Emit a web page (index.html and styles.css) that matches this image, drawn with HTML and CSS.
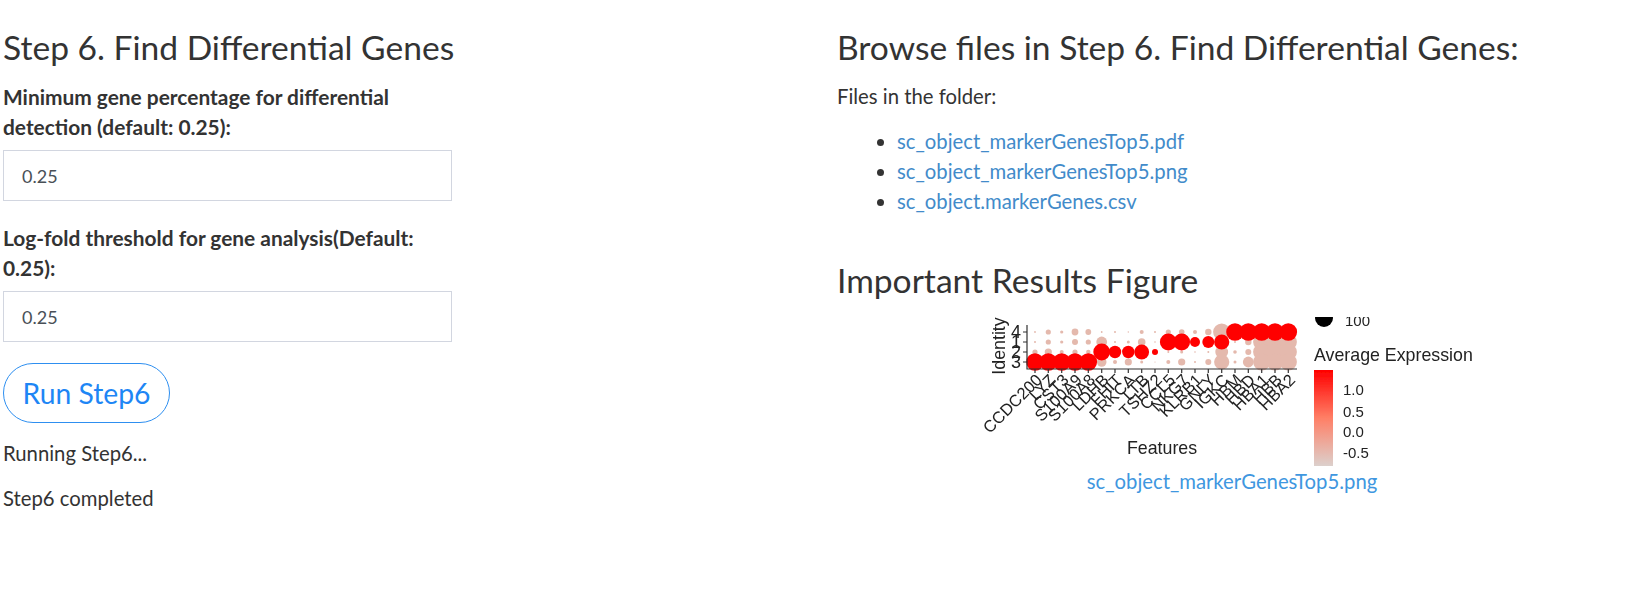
FILE: index.html
```html
<!DOCTYPE html>
<html lang="en">
<head>
  <meta charset="UTF-8" />
  <title>Step 6. Find Differential Genes</title>
  <link rel="stylesheet" href="styles.css">
</head>
<body>
  <div class="page">
    <section class="form-col">
      <h3>Step 6. Find Differential Genes</h3>
      <div class="field">
        <label for="minPct">Minimum gene percentage for differential detection (default: 0.25):</label>
        <input id="minPct" type="text" value="0.25" />
      </div>
      <div class="field">
        <label for="logFc">Log-fold threshold for gene analysis(Default: 0.25):</label>
        <input id="logFc" type="text" value="0.25" />
      </div>
      <button class="run-btn">Run Step6</button>
      <p class="status">Running Step6...</p>
      <p class="status">Step6 completed</p>
    </section>

    <section class="files-col">
      <h3>Browse files in Step 6. Find Differential Genes:</h3>
      <p class="files-title">Files in the folder:</p>
      <ul class="file-list">
        <li><a href="#">sc_object_markerGenesTop5.pdf</a></li>
        <li><a href="#">sc_object_markerGenesTop5.png</a></li>
        <li><a href="#">sc_object.markerGenes.csv</a></li>
      </ul>
      <h3 class="figure-title">Important Results Figure</h3>
      <figure class="result-figure">
        <svg class="plot" width="520" height="149" viewBox="972 317 520 149">
          <defs>
            <linearGradient id="scale" x1="0" y1="0" x2="0" y2="1">
              <stop offset="0" stop-color="#ff0000" />
              <stop offset="0.5" stop-color="#ff7f66" />
              <stop offset="1" stop-color="#dcd0cc" />
            </linearGradient>
            <filter id="soft"><feGaussianBlur stdDeviation="0.55" /></filter>
          </defs>
          <g filter="url(#soft)">
            <!-- row 4 -->
            <g class="pale">
              <circle cx="1035" cy="332" r="0.9" /><circle cx="1048.3" cy="332" r="2.6" /><circle cx="1061.7" cy="332" r="1.6" />
              <circle cx="1075" cy="332" r="3.4" /><circle cx="1088.3" cy="332" r="2.9" /><circle cx="1101.7" cy="332" r="0.9" />
              <circle cx="1115" cy="332" r="1" /><circle cx="1128.3" cy="332" r="0.7" /><circle cx="1141.7" cy="332" r="2" />
              <circle cx="1155" cy="332" r="1" /><circle cx="1168.3" cy="332" r="2.6" /><circle cx="1181.7" cy="332" r="2.8" />
              <circle cx="1195" cy="332" r="2" /><circle cx="1208.3" cy="332" r="3.2" /><circle cx="1221.7" cy="332" r="8.6" />
            </g>
            <!-- row 1 -->
            <g class="pale">
              <circle cx="1035" cy="342" r="1" /><circle cx="1048.3" cy="342" r="2.6" /><circle cx="1061.7" cy="342" r="1.6" />
              <circle cx="1075" cy="342" r="3" /><circle cx="1088.3" cy="342" r="2.6" /><circle cx="1101.7" cy="342" r="5.4" />
              <circle cx="1115" cy="342" r="1" /><circle cx="1128.3" cy="342" r="1.5" /><circle cx="1141.7" cy="342" r="3.8" />
              <circle cx="1155" cy="342" r="0.8" /><circle cx="1235" cy="342" r="1" /><circle cx="1248.3" cy="342" r="3.2" />
              <circle cx="1261.7" cy="342" r="8.6" /><circle cx="1275" cy="342" r="8.6" /><circle cx="1288.3" cy="342" r="8.6" />
            </g>
            <!-- row 2 -->
            <g class="pale">
              <circle cx="1035" cy="352" r="2.6" /><circle cx="1048.3" cy="352" r="3.6" /><circle cx="1061.7" cy="352" r="2" />
              <circle cx="1075" cy="352" r="2.6" /><circle cx="1088.3" cy="352" r="2.2" /><circle cx="1168.3" cy="352" r="1" />
              <circle cx="1181.7" cy="352" r="1.5" /><circle cx="1195" cy="352" r="0.8" /><circle cx="1208.3" cy="352" r="1" />
              <circle cx="1221.7" cy="352" r="6.4" /><circle cx="1235" cy="352" r="1.8" /><circle cx="1248.3" cy="352" r="3" />
              <circle cx="1261.7" cy="352" r="8.6" /><circle cx="1275" cy="352" r="8.6" /><circle cx="1288.3" cy="352" r="8.6" />
            </g>
            <!-- row 3 -->
            <g class="pale">
              <circle cx="1101.7" cy="362" r="4.8" /><circle cx="1115" cy="362" r="2" /><circle cx="1128.3" cy="362" r="3.6" />
              <circle cx="1141.7" cy="362" r="1.5" /><circle cx="1155" cy="362" r="0.6" /><circle cx="1168.3" cy="362" r="2" />
              <circle cx="1181.7" cy="362" r="3.6" /><circle cx="1195" cy="362" r="1" /><circle cx="1208.3" cy="362" r="3" />
              <circle cx="1221.7" cy="362" r="7.6" /><circle cx="1235" cy="362" r="1.5" /><circle cx="1248.3" cy="362" r="5.4" />
              <circle cx="1261.7" cy="362" r="8.6" /><circle cx="1275" cy="362" r="8.6" /><circle cx="1288.3" cy="362" r="8.6" />
            </g>
            <g class="hot">
              <circle cx="1035" cy="362" r="8.8" /><circle cx="1048.3" cy="362" r="8.8" /><circle cx="1061.7" cy="362" r="8.8" />
              <circle cx="1075" cy="362" r="8.8" /><circle cx="1088.3" cy="362" r="8.8" />
              <circle cx="1101.7" cy="352" r="8.4" /><circle cx="1115" cy="352" r="6.2" /><circle cx="1128.3" cy="352" r="6.2" />
              <circle cx="1141.7" cy="352" r="7.4" /><circle cx="1155" cy="352" r="3" />
              <circle cx="1168.3" cy="342" r="8.4" /><circle cx="1181.7" cy="342" r="8.4" /><circle cx="1195" cy="342" r="5" />
              <circle cx="1208.3" cy="342" r="6" /><circle cx="1221.7" cy="342" r="7.6" />
              <circle cx="1235" cy="332" r="8.8" /><circle cx="1248.3" cy="332" r="8.8" /><circle cx="1261.7" cy="332" r="8.8" />
              <circle cx="1275" cy="332" r="8.8" /><circle cx="1288.3" cy="332" r="8.8" />
            </g>
            <path class="axis" d="M1027 325V369H1297" />
            <path class="axis" d="M1023 332h4M1023 342h4M1023 352h4M1023 362h4" />
            <path class="axis" d="M1035 369v4M1048.3 369v4M1061.7 369v4M1075 369v4M1088.3 369v4M1101.7 369v4M1115 369v4M1128.3 369v4M1141.7 369v4M1155 369v4M1168.3 369v4M1181.7 369v4M1195 369v4M1208.3 369v4M1221.7 369v4M1235 369v4M1248.3 369v4M1261.7 369v4M1275 369v4M1288.3 369v4" />
            <text class="y-tick" x="1021" y="338" text-anchor="end">4</text>
            <text class="y-tick" x="1021" y="348" text-anchor="end">1</text>
            <text class="y-tick" x="1021" y="358" text-anchor="end">2</text>
            <text class="y-tick" x="1021" y="368" text-anchor="end">3</text>
            <text class="axis-label" transform="translate(1005 346) rotate(-90)" text-anchor="middle">Identity</text>
            <text class="tick" transform="translate(1043 381) rotate(-45)" text-anchor="end">CCDC200</text>
            <text class="tick" transform="translate(1056.3 381) rotate(-45)" text-anchor="end">LYZ</text>
            <text class="tick" transform="translate(1069.7 381) rotate(-45)" text-anchor="end">CST3</text>
            <text class="tick" transform="translate(1083 381) rotate(-45)" text-anchor="end">S100A9</text>
            <text class="tick" transform="translate(1096.3 381) rotate(-45)" text-anchor="end">S100A8</text>
            <text class="tick" transform="translate(1109.7 381) rotate(-45)" text-anchor="end">LDHB</text>
            <text class="tick" transform="translate(1123 381) rotate(-45)" text-anchor="end">FHIT</text>
            <text class="tick" transform="translate(1136.3 381) rotate(-45)" text-anchor="end">PRKCA</text>
            <text class="tick" transform="translate(1149.7 381) rotate(-45)" text-anchor="end">LTB</text>
            <text class="tick" transform="translate(1163 381) rotate(-45)" text-anchor="end">TSHZ2</text>
            <text class="tick" transform="translate(1176.3 381) rotate(-45)" text-anchor="end">CCL5</text>
            <text class="tick" transform="translate(1189.7 381) rotate(-45)" text-anchor="end">NKG7</text>
            <text class="tick" transform="translate(1203 381) rotate(-45)" text-anchor="end">KLRB1</text>
            <text class="tick" transform="translate(1216.3 381) rotate(-45)" text-anchor="end">GNLY</text>
            <text class="tick" transform="translate(1229.7 381) rotate(-45)" text-anchor="end">IGKC</text>
            <text class="tick" transform="translate(1243 381) rotate(-45)" text-anchor="end">HBM</text>
            <text class="tick" transform="translate(1256.3 381) rotate(-45)" text-anchor="end">HBD</text>
            <text class="tick" transform="translate(1269.7 381) rotate(-45)" text-anchor="end">HBA1</text>
            <text class="tick" transform="translate(1283 381) rotate(-45)" text-anchor="end">HBB</text>
            <text class="tick" transform="translate(1296.3 381) rotate(-45)" text-anchor="end">HBA2</text>
            <text class="axis-label" x="1162" y="454" text-anchor="middle">Features</text>
            <circle class="size-key" cx="1324" cy="318" r="9" />
            <text class="legend-num" x="1345" y="326">100</text>
            <text class="axis-label" x="1314" y="361">Average Expression</text>
            <rect x="1314" y="370" width="19" height="96" fill="url(#scale)" />
            <text class="legend-num" x="1343" y="395">1.0</text>
            <text class="legend-num" x="1343" y="417">0.5</text>
            <text class="legend-num" x="1343" y="437">0.0</text>
            <text class="legend-num" x="1343" y="458">-0.5</text>
          </g>
        </svg>
        <figcaption><a href="#">sc_object_markerGenesTop5.png</a></figcaption>
      </figure>
    </section>
  </div>
</body>
</html>
```

FILE: styles.css
```css
body {
  margin: 0;
  background: #fff;
  color: #333;
  font-family: "Lato", "Noto Sans", sans-serif;
  font-size: 20.3px;
}

.page {
  display: flex;
  padding: 26px 21px 0 3px;
}

.form-col {
  width: 834px;
}

.files-col {
  flex: 1;
  text-align: left;
}

h3 {
  margin: 0;
  font-size: 33.6px;
  font-weight: 400;
  line-height: 42px;
}

.field {
  width: 449px;
  margin-bottom: 21px;
}

.field label {
  display: block;
  width: 420px;
  margin-top: 14px;
  font-size: 20.9px;
  font-weight: 700;
  line-height: 30px;
}

.field + .field label {
  margin-top: 0;
}

.field + .field {
  padding-top: 1px;
}

.field input {
  display: block;
  box-sizing: border-box;
  width: 100%;
  height: 51px;
  margin-top: 8px;
  padding: 0 18px;
  border: 1px solid #d2d6e0;
  color: #495057;
  font-family: inherit;
  font-size: 18px;
}

.run-btn {
  display: block;
  width: 167px;
  height: 60px;
  border: 1px solid #2e8ff0;
  border-radius: 30px;
  background: #fff;
  color: #1e86f5;
  font-family: inherit;
  font-size: 28.3px;
}

.status {
  margin: 15px 0 0;
  line-height: 30px;
}

.files-title {
  margin: 13px 0 0;
  line-height: 30px;
}

.file-list {
  margin: 15px 0 0;
  padding-left: 60px;
  line-height: 30px;
}

.file-list a {
  color: #428bca;
  text-decoration: none;
}

.figure-title {
  margin-top: 43px;
}

.result-figure {
  margin: 16px 0 0;
  text-align: center;
}

.plot {
  display: block;
  margin: 0 auto;
}

.result-figure figcaption {
  line-height: 30px;
}

.result-figure a {
  color: #3f97e0;
  text-decoration: none;
}

.pale {
  fill: #e4b9ad;
}

.hot {
  fill: #ff0000;
}

.axis {
  fill: none;
  stroke: #333;
  stroke-width: 1.2;
}

.tick,
.y-tick,
.axis-label,
.legend-num {
  fill: #222;
  font-family: "Liberation Sans", sans-serif;
}

.tick {
  font-size: 16.5px;
}

.y-tick {
  font-size: 18px;
}

.axis-label {
  font-size: 17.8px;
}

.legend-num {
  font-size: 15px;
}

.size-key {
  fill: #000;
}
```
